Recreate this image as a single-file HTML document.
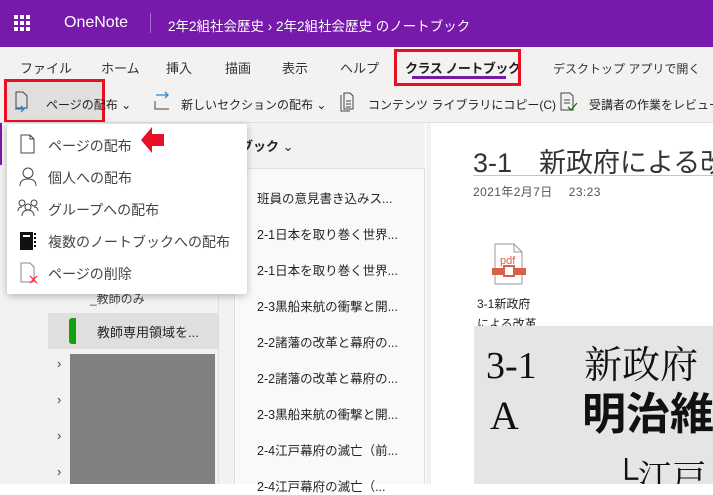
<!DOCTYPE html>
<html><head><meta charset="utf-8"><style>
*{margin:0;padding:0;box-sizing:border-box}
body{width:713px;height:484px;overflow:hidden;position:relative;background:#fff;font-family:"Liberation Sans","Noto Sans CJK JP",sans-serif;color:#252423}
.a{position:absolute;white-space:nowrap}
</style></head><body>
<div class="a" style="left:0;top:0;width:713px;height:47px;background:#7719aa"></div>
<svg class="a" style="left:14px;top:15px" width="18" height="18"><g fill="#fff"><rect x="0" y="0" width="4" height="4"/><rect x="6" y="0" width="4" height="4"/><rect x="12" y="0" width="4" height="4"/><rect x="0" y="6" width="4" height="4"/><rect x="6" y="6" width="4" height="4"/><rect x="12" y="6" width="4" height="4"/><rect x="0" y="12" width="4" height="4"/><rect x="6" y="12" width="4" height="4"/><rect x="12" y="12" width="4" height="4"/></g></svg>
<div class="a" style="left:64px;top:14px;color:#fff;font-size:16px">OneNote</div>
<div class="a" style="left:150px;top:13px;width:1px;height:20px;background:#a86cc8"></div>
<div class="a" style="left:168px;top:15px;color:#fff;font-size:13.5px">2年2組社会歴史 › 2年2組社会歴史 のノートブック</div>
<div class="a" style="left:0;top:47px;width:713px;height:75px;background:#f3f2f1"></div>
<div class="a" style="left:20px;top:58px;font-size:13px;color:#333">ファイル</div>
<div class="a" style="left:101px;top:58px;font-size:13px;color:#333">ホーム</div>
<div class="a" style="left:166px;top:58px;font-size:13px;color:#333">挿入</div>
<div class="a" style="left:225px;top:58px;font-size:13px;color:#333">描画</div>
<div class="a" style="left:282px;top:58px;font-size:13px;color:#333">表示</div>
<div class="a" style="left:340px;top:58px;font-size:13px;color:#333">ヘルプ</div>
<div class="a" style="left:405px;top:58px;font-size:13px;color:#222;font-weight:bold;letter-spacing:-0.5px">クラス ノートブック</div>
<div class="a" style="left:412px;top:76px;width:94px;height:3px;background:#7719aa"></div>
<div class="a" style="left:394px;top:49px;width:127px;height:37px;border:3px solid #e81123"></div>
<div class="a" style="left:553px;top:60px;font-size:12px;color:#333">デスクトップ アプリで開く</div>
<div class="a" style="left:7px;top:82px;width:96px;height:39px;background:#e1dfdd"></div>
<div class="a" style="left:4px;top:79px;width:101px;height:44px;border:3px solid #e81123"></div>
<svg class="a" style="left:14px;top:91px" width="16" height="22"><path d="M2 1h7l4 4v12H2z" fill="none" stroke="#444"/><path d="M1 18h9M7 15l3 3-3 3" fill="none" stroke="#2b88d8" stroke-width="1.3"/></svg>
<div class="a" style="left:46px;top:96px;font-size:12px">ページの配布 ⌄</div>
<svg class="a" style="left:152px;top:89px" width="20" height="24"><path d="M3 12v8h14" fill="none" stroke="#444"/><path d="M4 6h12M13 3l3 3-3 3" fill="none" stroke="#2b88d8" stroke-width="1.3"/></svg>
<div class="a" style="left:181px;top:96px;font-size:12px">新しいセクションの配布 ⌄</div>
<svg class="a" style="left:340px;top:92px" width="14" height="20"><path d="M1 3v16h9M4 1h6l3 3v13H4z" fill="none" stroke="#444"/><path d="M6 9h5M6 12h5M6 15h5" stroke="#444"/></svg>
<div class="a" style="left:368px;top:96px;font-size:12px">コンテンツ ライブラリにコピー(C)</div>
<svg class="a" style="left:560px;top:92px" width="18" height="20"><path d="M1 1h9l3 3v14H1z" fill="none" stroke="#444"/><path d="M4 8h6M4 11h6" stroke="#444"/><path d="M8 15l3 3 6-7" fill="none" stroke="#107c10" stroke-width="1.3"/></svg>
<div class="a" style="left:589px;top:96px;font-size:12px">受講者の作業をレビュー</div>
<div class="a" style="left:0;top:122px;width:713px;height:1px;background:#e1dfdd"></div>
<!-- left column -->
<div class="a" style="left:0;top:123px;width:47px;height:361px;background:#f3f2f1"></div>
<div class="a" style="left:0;top:123px;width:2px;height:42px;background:#7719aa"></div>
<div class="a" style="left:47px;top:123px;width:172px;height:361px;background:#f3f2f1;border-right:1px solid #e1dfdd"></div>
<div class="a" style="left:90px;top:290px;font-size:12px;color:#444">_教師のみ</div>
<div class="a" style="left:48px;top:313px;width:170px;height:36px;background:#e1dfdd"></div>
<div class="a" style="left:69px;top:318px;width:7px;height:26px;background:#13a10e;border-radius:3px 0 0 3px"></div>
<div class="a" style="left:97px;top:322px;font-size:13px">教師専用領域を...</div>
<div class="a" style="left:70px;top:354px;width:145px;height:130px;background:#808080"></div>
<div class="a" style="left:57px;top:356px;font-size:13px;color:#444">›</div>
<div class="a" style="left:57px;top:392px;font-size:13px;color:#444">›</div>
<div class="a" style="left:57px;top:428px;font-size:13px;color:#444">›</div>
<div class="a" style="left:57px;top:464px;font-size:13px;color:#444">›</div>
<!-- pages column -->
<div class="a" style="left:219px;top:123px;width:16px;height:361px;background:#f3f2f1;border-right:1px solid #e1dfdd"></div>
<div class="a" style="left:236px;top:123px;width:189px;height:361px;background:#faf9f8;border-right:1px solid #e1dfdd"></div>
<div class="a" style="left:236px;top:123px;width:189px;height:46px;background:#f3f2f1;border-bottom:1px solid #e1dfdd"></div>
<div class="a" style="left:240px;top:136px;font-size:13px;font-weight:bold">ブック <span style="font-weight:normal">⌄</span></div>
<div class="a" style="left:257px;top:191px;font-size:12.5px;line-height:16px">班員の意見書き込みス...</div>
<div class="a" style="left:257px;top:227px;font-size:12.5px;line-height:16px">2-1日本を取り巻く世界...</div>
<div class="a" style="left:257px;top:263px;font-size:12.5px;line-height:16px">2-1日本を取り巻く世界...</div>
<div class="a" style="left:257px;top:299px;font-size:12.5px;line-height:16px">2-3黒船来航の衝撃と開...</div>
<div class="a" style="left:257px;top:335px;font-size:12.5px;line-height:16px">2-2諸藩の改革と幕府の...</div>
<div class="a" style="left:257px;top:371px;font-size:12.5px;line-height:16px">2-2諸藩の改革と幕府の...</div>
<div class="a" style="left:257px;top:407px;font-size:12.5px;line-height:16px">2-3黒船来航の衝撃と開...</div>
<div class="a" style="left:257px;top:443px;font-size:12.5px;line-height:16px">2-4江戸幕府の滅亡（前...</div>
<div class="a" style="left:257px;top:479px;font-size:12.5px;line-height:16px">2-4江戸幕府の滅亡（...</div>
<!-- content -->
<div class="a" style="left:426px;top:123px;width:5px;height:361px;background:#f3f2f1"></div>
<div class="a" style="left:473px;top:141px;font-size:27px;color:#333">3-1　新政府による改</div>
<div class="a" style="left:473px;top:175px;width:240px;height:1px;background:#c8c6c4"></div>
<div class="a" style="left:473px;top:183px;font-size:12px;color:#555;letter-spacing:0.4px">2021年2月7日　 23:23</div>
<svg class="a" style="left:491px;top:243px" width="40" height="44"><path d="M4 1h19l8 8v32H4z" fill="#fff" stroke="#999"/><path d="M23 1v8h8" fill="none" stroke="#999"/><text x="9" y="21" font-size="11" fill="#d9614a" font-family="Liberation Sans">pdf</text><rect x="1" y="25" width="34" height="7" fill="#d9614a"/><rect x="13" y="23" width="10" height="10" fill="#fff" stroke="#d9614a" stroke-width="2"/></svg>
<div class="a" style="left:477px;top:294px;font-size:12px;line-height:20px">3-1新政府<br>による改革</div>
<div class="a" style="left:474px;top:326px;width:239px;height:158px;background:#e6e5e5;overflow:hidden">
<div class="a" style="left:12px;top:18px;font-size:38px;line-height:44px;font-family:'Liberation Serif','Noto Serif CJK SC',serif;color:#111">3-1　 新政府</div>
<div class="a" style="left:16px;top:68px;font-size:40px;line-height:44px;font-family:'Liberation Serif','Noto Serif CJK SC',serif;color:#111">A</div>
<div class="a" style="left:108px;top:64px;font-size:44px;line-height:50px;font-weight:bold;font-family:'Liberation Sans','Noto Sans CJK JP',sans-serif;color:#111">明治維</div>
<div class="a" style="left:140px;top:124px;font-size:34px;font-family:'Liberation Serif','Noto Serif CJK SC',serif;color:#111">└江戸</div>
</div>
<!-- dropdown -->
<div class="a" style="left:7px;top:124px;width:240px;height:170px;background:#fff;box-shadow:0 2px 8px rgba(0,0,0,.25);border-radius:2px"></div>
<svg class="a" style="left:20px;top:134px" width="16" height="20"><path d="M1 1h9l4 4v14H1z" fill="none" stroke="#444"/><path d="M10 1v4h4" fill="none" stroke="#444"/></svg>
<div class="a" style="left:48px;top:136px;font-size:14px;color:#444">ページの配布</div>
<svg class="a" style="left:141px;top:126px" width="34" height="30"><path d="M0 14L11 1v7h12v12H11v7z" fill="#e81123"/></svg>
<svg class="a" style="left:19px;top:167px" width="18" height="20"><circle cx="9" cy="6" r="5" fill="none" stroke="#444"/><path d="M1 19c0-5 3-7 8-7s8 2 8 7" fill="none" stroke="#444"/></svg>
<div class="a" style="left:48px;top:168px;font-size:14px;color:#444">個人への配布</div>
<svg class="a" style="left:17px;top:199px" width="22" height="18"><g fill="none" stroke="#444"><circle cx="5" cy="4" r="3"/><circle cx="17" cy="4" r="3"/><circle cx="11" cy="8" r="3"/><path d="M1 12c0-3 2-4 4-4M21 12c0-3-2-4-4-4M5 17c0-4 3-6 6-6s6 2 6 6"/></g></svg>
<div class="a" style="left:48px;top:200px;font-size:14px;color:#444">グループへの配布</div>
<svg class="a" style="left:19px;top:231px" width="18" height="20"><rect x="1" y="1" width="13" height="18" fill="#111"/><rect x="4" y="4" width="7" height="2" fill="#fff"/><path d="M15 3h2M15 7h2M15 11h2M15 15h2" stroke="#111" stroke-width="2"/></svg>
<div class="a" style="left:48px;top:232px;font-size:14px;color:#444">複数のノートブックへの配布</div>
<svg class="a" style="left:20px;top:262px" width="20" height="22"><path d="M1 1h9l4 4v15H1z" fill="none" stroke="#888"/><path d="M10 14l7 7M17 14l-7 7" stroke="#e81123"/></svg>
<div class="a" style="left:48px;top:264px;font-size:14px;color:#444">ページの削除</div>
</body></html>
